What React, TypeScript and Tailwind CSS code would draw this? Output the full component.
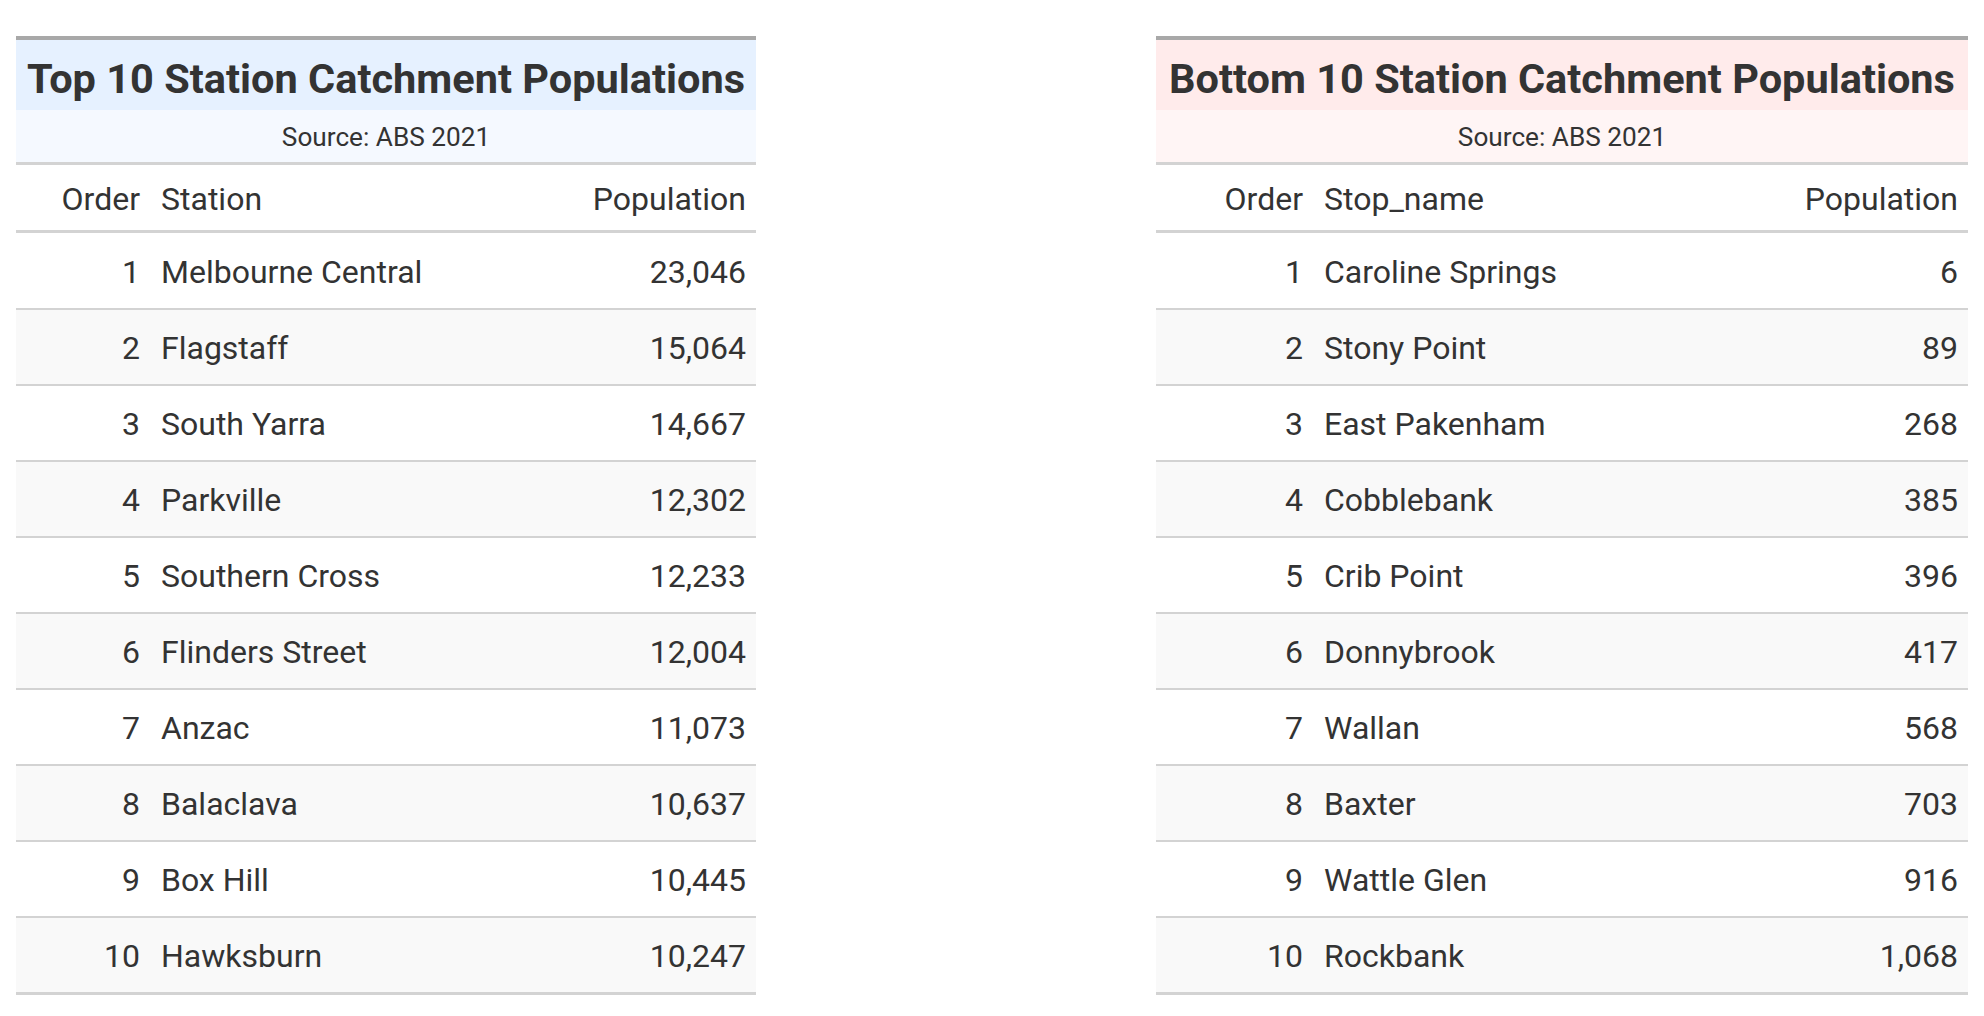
import React from "react";

type Row = [number, string, string];

const top: Row[] = [
  [1, "Melbourne Central", "23,046"],
  [2, "Flagstaff", "15,064"],
  [3, "South Yarra", "14,667"],
  [4, "Parkville", "12,302"],
  [5, "Southern Cross", "12,233"],
  [6, "Flinders Street", "12,004"],
  [7, "Anzac", "11,073"],
  [8, "Balaclava", "10,637"],
  [9, "Box Hill", "10,445"],
  [10, "Hawksburn", "10,247"],
];

const bottom: Row[] = [
  [1, "Caroline Springs", "6"],
  [2, "Stony Point", "89"],
  [3, "East Pakenham", "268"],
  [4, "Cobblebank", "385"],
  [5, "Crib Point", "396"],
  [6, "Donnybrook", "417"],
  [7, "Wallan", "568"],
  [8, "Baxter", "703"],
  [9, "Wattle Glen", "916"],
  [10, "Rockbank", "1,068"],
];

function Table({
  title,
  rows,
  nameLabel,
  width,
  orderW,
  titleBg,
  subBg,
}: {
  title: string;
  rows: Row[];
  nameLabel: string;
  width: string;
  orderW: string;
  titleBg: string;
  subBg: string;
}) {
  return (
    <div className={`${width} shrink-0 border-t-4 border-[#a8a8a8] text-[#333333]`}>
      <div className={`${titleBg} h-[70px] flex items-center justify-center text-[41.5px] font-bold leading-none pt-[8px] whitespace-nowrap`}>
        {title}
      </div>
      <div className={`${subBg} h-[52px] flex items-center justify-center text-[26.2px] leading-none pt-[3px]`}>
        Source: ABS 2021
      </div>
      <div className="border-t-[3px] border-[#d3d3d3] h-[71px] border-b-[3px] flex items-center text-[32px] leading-none pt-[3px]">
        <div className={`${orderW} shrink-0 text-right pr-[10px]`}>Order</div>
        <div className="flex-1 pl-[11px]">{nameLabel}</div>
        <div className="pr-[10px] text-right">Population</div>
      </div>
      {rows.map(([n, name, pop], i) => (
        <div
          key={n}
          className={`flex items-center text-[32px] leading-none pt-[2px] ${
            i === 0 ? "h-[75px]" : "h-[76px] border-t-2 border-[#d3d3d3]"
          } ${i % 2 === 1 ? "bg-[#f9f9f9]" : "bg-white"}`}
        >
          <div className={`${orderW} shrink-0 text-right pr-[10px]`}>{n}</div>
          <div className="flex-1 pl-[11px]">{name}</div>
          <div className="pr-[10px] text-right">{pop}</div>
        </div>
      ))}
      <div className="h-[3px] bg-[#d3d3d3]" />
    </div>
  );
}

export default function App() {
  return (
    <div
      className="w-[1984px] h-[1016px] bg-white flex items-start pt-[36px] pl-[16px] gap-[400px]"
      style={{ fontFamily: "Roboto, 'Liberation Sans', sans-serif" }}
    >
      <Table
        title="Top 10 Station Catchment Populations"
        rows={top}
        nameLabel="Station"
        width="w-[740px]"
        orderW="w-[134px]"
        titleBg="bg-[#e6f1ff]"
        subBg="bg-[#f5f9ff]"
      />
      <Table
        title="Bottom 10 Station Catchment Populations"
        rows={bottom}
        nameLabel="Stop_name"
        width="w-[812px]"
        orderW="w-[157px]"
        titleBg="bg-[#ffebeb]"
        subBg="bg-[#fff5f5]"
      />
    </div>
  );
}
